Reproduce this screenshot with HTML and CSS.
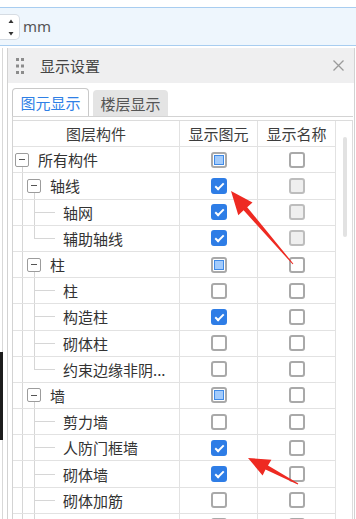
FILE: index.html
```html
<!DOCTYPE html>
<html lang="zh">
<head>
<meta charset="utf-8">
<link rel="stylesheet" href="styles.css">
</head>
<body>
<div class="unitbar">
  <div class="spin">
    <svg width="20" height="26" viewBox="0 0 20 26"><polygon points="9.5,9 14.5,9 12,5.5" fill="#333"/><polygon points="9.5,18 14.5,18 12,21.5" fill="#333"/></svg>
  </div>
  <span class="unit">mm</span>
</div>
<div class="main">
  <div class="side"><div class="dark"></div></div>
  <div class="panel">
    <div class="head">
      <svg class="grip" width="8" height="16" viewBox="0 0 8 16"><g fill="#8c8c8c"><rect x="0" y="0" width="3" height="3"/><rect x="5" y="0" width="3" height="3"/><rect x="0" y="6.5" width="3" height="3"/><rect x="5" y="6.5" width="3" height="3"/><rect x="0" y="13" width="3" height="3"/><rect x="5" y="13" width="3" height="3"/></g></svg>
      <span class="title">显示设置</span>
      <svg class="close" width="11" height="11" viewBox="0 0 11 11"><path d="M0.5 0.5L10.5 10.5M10.5 0.5L0.5 10.5" stroke="#9a9a9a" stroke-width="1.3"/></svg>
    </div>
    <div class="tabs">
      <div class="tab active">图元显示</div>
      <div class="tab">楼层显示</div>
    </div>
    <div class="tabbody">
      <div class="grid">
        <div class="c hd">图层构件</div><div class="c hd">显示图元</div><div class="c hd">显示名称</div>

        <div class="c nm root"><span class="exp"></span>所有构件</div><div class="c ck"><span class="cb ind"></span></div><div class="c ck"><span class="cb"></span></div>

        <div class="c nm grp"><span class="exp"></span>轴线</div><div class="c ck"><span class="cb on"></span></div><div class="c ck"><span class="cb dis"></span></div>
        <div class="c nm leaf">轴网</div><div class="c ck"><span class="cb on"></span></div><div class="c ck"><span class="cb dis"></span></div>
        <div class="c nm leaf last">辅助轴线</div><div class="c ck"><span class="cb on"></span></div><div class="c ck"><span class="cb dis"></span></div>

        <div class="c nm grp"><span class="exp"></span>柱</div><div class="c ck"><span class="cb ind"></span></div><div class="c ck"><span class="cb"></span></div>
        <div class="c nm leaf">柱</div><div class="c ck"><span class="cb"></span></div><div class="c ck"><span class="cb"></span></div>
        <div class="c nm leaf">构造柱</div><div class="c ck"><span class="cb on"></span></div><div class="c ck"><span class="cb"></span></div>
        <div class="c nm leaf">砌体柱</div><div class="c ck"><span class="cb"></span></div><div class="c ck"><span class="cb"></span></div>
        <div class="c nm leaf last">约束边缘非阴...</div><div class="c ck"><span class="cb"></span></div><div class="c ck"><span class="cb"></span></div>

        <div class="c nm grp"><span class="exp"></span>墙</div><div class="c ck"><span class="cb ind"></span></div><div class="c ck"><span class="cb"></span></div>
        <div class="c nm leaf">剪力墙</div><div class="c ck"><span class="cb"></span></div><div class="c ck"><span class="cb"></span></div>
        <div class="c nm leaf">人防门框墙</div><div class="c ck"><span class="cb on"></span></div><div class="c ck"><span class="cb"></span></div>
        <div class="c nm leaf">砌体墙</div><div class="c ck"><span class="cb on"></span></div><div class="c ck"><span class="cb"></span></div>
        <div class="c nm leaf">砌体加筋</div><div class="c ck"><span class="cb"></span></div><div class="c ck"><span class="cb"></span></div>
        <div class="c nm leaf"></div><div class="c ck"><span class="cb"></span></div><div class="c ck"><span class="cb"></span></div>
      </div>
      <div class="scroll"><div class="thumb"></div></div>
    </div>
  </div>
</div>
<svg class="arrows" width="356" height="519" viewBox="0 0 356 519">
  <polygon fill="#ee2a22" points="231,191 252.5,202.5 247.2,207.2 293.4,263.7 292.6,264.3 243.6,210.3 238.3,215.2"/>
  <polygon fill="#ee2a22" points="248,458 271.4,459.8 268,465.4 298.3,483.5 297.7,484.5 265.5,469.6 262.6,475.5"/>
</svg>
</body>
</html>
```

FILE: styles.css
```css
html, body {
  margin: 0;
  padding: 0;
}
body {
  width: 356px;
  height: 519px;
  overflow: hidden;
  background: #fff;
  font-family: "Noto Sans CJK SC", "Noto Sans", sans-serif;
  font-size: 15px;
  color: #333;
  position: relative;
}
.unitbar {
  margin-top: 7px;
  height: 39px;
  box-sizing: border-box;
  border-top: 1px solid #a8cdf0;
  border-bottom: 1px solid #a8cdf0;
  background: #eef6fd;
  display: flex;
  align-items: center;
}
.spin {
  width: 20px;
  height: 26px;
  box-sizing: border-box;
  background: #fff;
  border: 1px solid #d6dce3;
  border-left: 0;
  border-radius: 0 5px 5px 0;
  display: flex;
}
.spin svg { display: block; margin-left: -1px; margin-top: -1px; }
.unit {
  margin-left: 3px;
  color: #555;
  font-family: "Noto Sans", sans-serif;
  font-size: 15px;
  line-height: 1;
}
.main {
  margin-top: 2px;
  display: flex;
  height: 471px;
}
.side {
  width: 7px;
  background: linear-gradient(#d8d8d8, #d8d8d8) 2px 0 / 1px 100% no-repeat;
}
.dark {
  margin-top: 304px;
  height: 88px;
  width: 3px;
  background: #1c1c1c;
}
.panel {
  flex: 1;
  min-width: 0;
  border-left: 1px solid #d2d2d2;
  border-right: 1px solid #d2d2d2;
  margin-right: 1px;
  display: flex;
  flex-direction: column;
}
.head {
  height: 35px;
  flex: none;
  background: #efeff0;
  display: flex;
  align-items: center;
  padding-left: 8px;
}
.grip { display: block; }
.title {
  margin-left: 16px;
  color: #444;
  font-size: 15px;
}
.close {
  display: block;
  margin-left: auto;
  margin-right: 10px;
}
.tabs {
  display: flex;
  align-items: flex-end;
  padding: 5px 0 0 4px;
  flex: none;
}
.tab {
  width: 75px;
  height: 26px;
  margin-left: 4px;
  background: #e4e4e4;
  color: #555;
  border-radius: 4px 4px 0 0;
  display: flex;
  align-items: center;
  justify-content: center;
  font-size: 15px;
}
.tab.active {
  margin-left: 0;
  width: 77px;
  height: 28px;
  box-sizing: border-box;
  background: #fff;
  color: #2f80e6;
  border: 1px solid #c9c9c9;
  border-bottom: 0;
}
.tabbody {
  flex: 1;
  min-height: 0;
  overflow: hidden;
  margin-left: 4px;
  margin-right: 1px;
  border-left: 1px solid #d3d3d3;
  border-top: 1px solid #d3d3d3;
  padding-top: 3px;
  display: flex;
  align-items: flex-start;
}
.grid {
  width: 323px;
  flex: none;
  border-top: 1px solid #dcdcdc;
  display: grid;
  grid-template-columns: 167px 78px 78px;
  grid-auto-rows: 26.2px;
}
.c {
  box-sizing: border-box;
  border-right: 1px solid #e2e2e2;
  border-bottom: 1px solid #e2e2e2;
  display: flex;
  align-items: center;
  white-space: nowrap;
  overflow: hidden;
}
.hd {
  justify-content: center;
  color: #3c3c3c;
}
.ck { justify-content: center; }
.nm { color: #333; }
.root {
  padding-left: 2px;
  background: linear-gradient(#d6d6d6, #d6d6d6) 9px 100% / 1px 50% no-repeat;
}
.grp {
  padding-left: 14px;
  background:
    linear-gradient(#d6d6d6, #d6d6d6) 9px 0 / 1px 100% no-repeat,
    linear-gradient(#d6d6d6, #d6d6d6) 21px 100% / 1px 50% no-repeat;
}
.leaf {
  padding-left: 50px;
  background:
    linear-gradient(#d6d6d6, #d6d6d6) 9px 0 / 1px 100% no-repeat,
    linear-gradient(#d6d6d6, #d6d6d6) 21px 0 / 1px 100% no-repeat,
    linear-gradient(#d6d6d6, #d6d6d6) 21px 50% / 21px 1px no-repeat;
}
.leaf.last {
  background:
    linear-gradient(#d6d6d6, #d6d6d6) 9px 0 / 1px 100% no-repeat,
    linear-gradient(#d6d6d6, #d6d6d6) 21px 0 / 1px 50% no-repeat,
    linear-gradient(#d6d6d6, #d6d6d6) 21px 50% / 21px 1px no-repeat;
}
.exp {
  width: 14px;
  height: 14px;
  box-sizing: border-box;
  border: 1px solid #9c9c9c;
  border-radius: 2px;
  background: #fff;
  margin-right: 9px;
  display: flex;
  align-items: center;
  justify-content: center;
  flex: none;
}
.exp::before {
  content: "";
  width: 6px;
  height: 1px;
  background: #555;
}
.cb {
  width: 16px;
  height: 16px;
  box-sizing: border-box;
  border: 2px solid #a9a9a9;
  border-radius: 3px;
  background: #fff;
  position: relative;
  display: block;
}
.cb.on {
  background: #2e7de6;
  border-color: #2e7de6;
}
.cb.on::after {
  content: "";
  position: absolute;
  left: 4px;
  top: 1px;
  width: 3px;
  height: 7px;
  border: solid #fff;
  border-width: 0 2px 2px 0;
  transform: rotate(45deg);
}
.cb.ind::after {
  content: "";
  position: absolute;
  left: 1px;
  top: 1px;
  width: 10px;
  height: 10px;
  box-sizing: border-box;
  background: #a3cbfb;
  border: 1px solid #3f8ae6;
}
.cb.dis {
  background: #efefef;
  border-color: #bdbdbd;
}
.scroll {
  width: 16px;
  height: 420px;
  flex: none;
  border-top: 1px solid #dcdcdc;
  border-right: 1px solid #dcdcdc;
}
.thumb {
  margin: 16px 0 0 7px;
  width: 4px;
  height: 100px;
  background: #e2e2e2;
  border-radius: 2px;
}
.arrows {
  position: absolute;
  left: 0;
  top: 0;
  pointer-events: none;
}
```
